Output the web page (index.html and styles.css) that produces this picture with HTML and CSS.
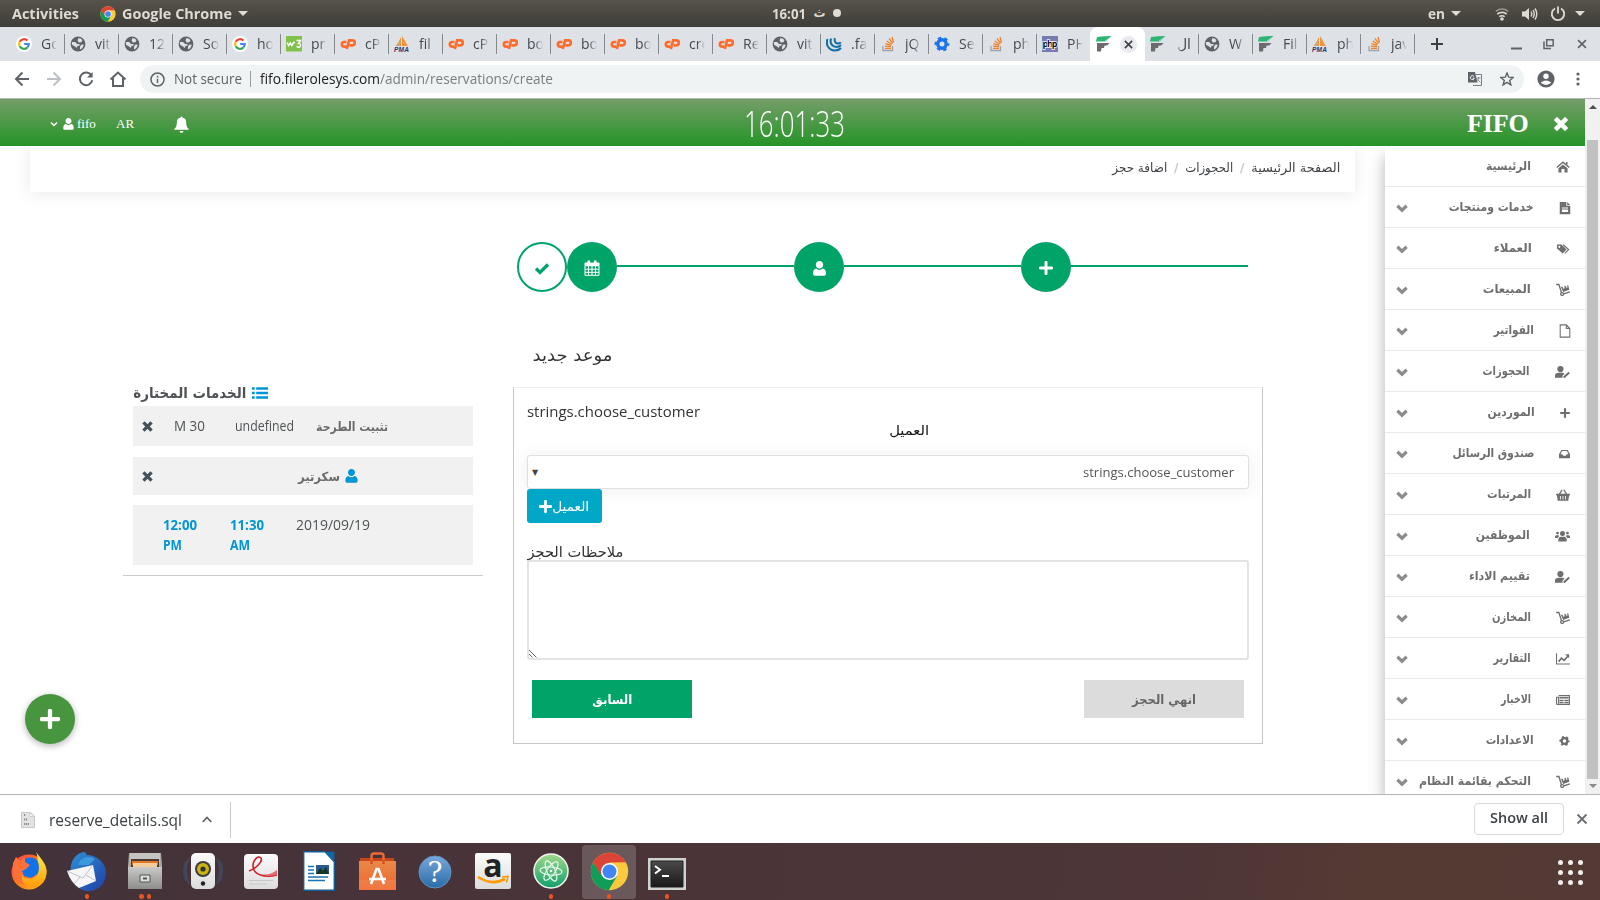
FILE: index.html
```html
<!DOCTYPE html>
<html lang="en">
<head>
<meta charset="utf-8">
<title>FIFO</title>
<link rel="stylesheet" href="styles.css">
</head>
<body>
<svg class="defs" width="0" height="0">
  <defs>
    <linearGradient id="gff" x1="0" y1="0" x2="1" y2="1"><stop offset="0" stop-color="#ff3b4e"/><stop offset=".5" stop-color="#ff7a1c"/><stop offset="1" stop-color="#ffc51a"/></linearGradient>
    <linearGradient id="gffy" x1="0" y1="0" x2="0" y2="1"><stop offset="0" stop-color="#fff14a"/><stop offset="1" stop-color="#ff9a0a"/></linearGradient>
    <linearGradient id="gtb" x1="0" y1="0" x2="1" y2="1"><stop offset="0" stop-color="#2f8fd6"/><stop offset="1" stop-color="#1f3fa5"/></linearGradient>
    <linearGradient id="ggrey" x1="0" y1="0" x2="0" y2="1"><stop offset="0" stop-color="#c9c9c7"/><stop offset="1" stop-color="#8d8d8b"/></linearGradient>
    <linearGradient id="gwhite" x1="0" y1="0" x2="0" y2="1"><stop offset="0" stop-color="#fbfbfb"/><stop offset="1" stop-color="#dcdcdc"/></linearGradient>
    <linearGradient id="gbag" x1="0" y1="0" x2="0" y2="1"><stop offset="0" stop-color="#e8894a"/><stop offset="1" stop-color="#f0652a"/></linearGradient>
    <linearGradient id="ghelp" x1="0" y1="0" x2="0" y2="1"><stop offset="0" stop-color="#79a8dc"/><stop offset="1" stop-color="#2b6ca6"/></linearGradient>
    <linearGradient id="gatom" x1="0" y1="0" x2="0" y2="1"><stop offset="0" stop-color="#a3d98a"/><stop offset="1" stop-color="#109f6d"/></linearGradient>
    <linearGradient id="gterm" x1="0" y1="0" x2="0" y2="1"><stop offset="0" stop-color="#4a4a4a"/><stop offset="1" stop-color="#191919"/></linearGradient>
  </defs>
  <symbol id="chrome" viewBox="0 0 48 48"><circle cx="24" cy="24" r="23" fill="#fbc93d"/><path d="M4.100 12.500A23 23 0 0 0 23 47l10-17-9-6-9 5z" fill="#0f9d58"/><path d="M4.100 12.500A23 23 0 0 1 43.900 12.500L24 13 14 29z" fill="#db4437"/><circle cx="24" cy="24" r="10.500" fill="#fff"/><circle cx="24" cy="24" r="8.600" fill="#4285f4"/></symbol>
  <symbol id="google" viewBox="0 0 16 16"><circle cx="8" cy="8" r="8" fill="#fff"/><g fill="none" stroke-width="2.100"><path d="M11.500 4.600A4.900 4.900 0 0 0 3.700 5.700" stroke="#ea4335"/><path d="M3.700 5.700a4.900 4.900 0 0 0 0 4.600" stroke="#fbbc05"/><path d="M3.700 10.300a4.900 4.900 0 0 0 7.600 1.300" stroke="#34a853"/><path d="M11.300 11.600A4.900 4.900 0 0 0 12.800 8H8.200" stroke="#4285f4"/></g></symbol>
  <symbol id="globe" viewBox="0 0 16 16"><circle cx="8" cy="8" r="7.400" fill="#5f6368"/><path d="M1.800 6h3.400l1.800 1.900h2.500v1.800H7.600L6.800 12 5 10.600 2 8.800zM8.200 2.200l2.600.4 1.600 1.600-1 2-2.700.2-1.100-1.800zM10 10.500l1.500-2 2.400.2-1.600 3.600-2.300 1.200z" fill="#dee1e6"/></symbol>
  <symbol id="w3" viewBox="0 0 16 16"><path d="M0 0h16v15.500H0z" fill="#7fc24a"/><path d="M1 6.500l1.600 3L4.200 7l1.600 2.500L7.500 6.500h1.500" stroke="#fff" stroke-width="1.500" fill="none"/><path d="M10.500 4.500h4L12.500 7.500c3 0 2.500 4-.3 3.800l-1.700-.9" stroke="#fff" stroke-width="1.500" fill="none"/></symbol>
  <symbol id="cp" viewBox="0 0 16 16"><g fill="none" stroke="#ff6c2c" stroke-width="2.700"><path d="M6.500 6H4.200a2.300 2.300 0 0 0 0 4.700H6"/><path d="M6.800 13l2.300-8.700h3.300a2.500 2.500 0 0 1 0 5H9.500"/></g></symbol>
  <symbol id="pma" viewBox="0 0 16 16"><path d="M7 1 2.500 10H7zM8 0l5.800 10H8z" fill="#f5933a"/><path d="M1.500 10h4L7 3z" fill="#c9a87c"/><text x="0" y="15.500" font-family="Liberation Sans" font-size="6.500" font-weight="bold" font-style="italic" fill="#33336b" textLength="15">PMA</text></symbol>
  <symbol id="jq" viewBox="0 0 16 16"><g fill="none" stroke="#0f71a8" stroke-width="2"><path d="M1.500 3c-2 6 1.500 11.500 7.500 11.500 2.500 0 4.500-.8 6-2.500"/><path d="M5 2.500c-1.500 5 1.500 8.500 5.500 8.500 2 0 3.500-.8 4.500-2"/><path d="M8.800 2c-1 3.500 1 5.500 3.500 5.500 1.300 0 2-.5 2.500-1.300"/></g></symbol>
  <symbol id="so" viewBox="0 0 16 16"><path d="M3 10v4.500h9.500V10" fill="none" stroke="#a0a2a5" stroke-width="1.300"/><g stroke="#f48024" stroke-width="1.300"><path d="M5 12.400h6M5 10.200l6 .5M5.400 7.700l5.700 1.600M6.700 5l5 3.300M9 2.500l3.700 4.800M12 1l1.500 5.500"/></g></symbol>
  <symbol id="gear" viewBox="0 0 16 16"><circle cx="8" cy="8" r="4.200" fill="none" stroke="currentColor" stroke-width="3.400"/><circle cx="8" cy="8" r="6.300" fill="none" stroke="currentColor" stroke-width="2.200" stroke-dasharray="3.300 3.300" stroke-dashoffset="1.600"/></symbol>
  <symbol id="php" viewBox="0 0 16 16"><path d="M0 0h16v16H0z" fill="#777bb3"/><text x=".5" y="10.800" font-family="Open Sans" font-size="9" font-weight="bold" fill="#111" stroke="#fff" stroke-width="1.500" paint-order="stroke" textLength="15">php</text></symbol>
  <symbol id="fr" viewBox="0 0 16 16"><path d="M1 1Q8 0 15.500 0L12 3.500 9.500 5.500H0z" fill="#2bb673"/><path d="M9 5l6-4" stroke="#dee1e6" stroke-width=".7"/><path d="M1 7h12.500l-2 2.300-3 .5-.5 2.200H5.500L5 15.500H1z" fill="#6b6b6b"/></symbol>
  <symbol id="times" viewBox="0 0 16 16"><path d="M3 3l10 10M13 3 3 13" stroke="currentColor" stroke-width="4"/></symbol>
  <symbol id="x" viewBox="0 0 16 16"><path d="M3.500 3.500l9 9M12.500 3.500l-9 9" stroke="currentColor" stroke-width="1.900"/></symbol>
  <symbol id="plus" viewBox="0 0 16 16"><path d="M8 1.500v13M1.500 8h13" stroke="currentColor" stroke-width="3.400" stroke-linecap="round"/></symbol>
  <symbol id="user" viewBox="0 0 448 512"><path fill="currentColor" d="M224 256c70.700 0 128-57.300 128-128S294.700 0 224 0 96 57.300 96 128s57.300 128 128 128zm110 0c-30 28-70 44-110 44s-80-16-110-44C40 262 0 330 0 422c0 54 21.500 82 60 82h328c38.500 0 60-28 60-82 0-92-40-160-114-166z"/></symbol>
  <symbol id="chev" viewBox="0 0 16 16"><path d="M1.800 5l6.200 6 6.200-6" fill="none" stroke="currentColor" stroke-width="4.200"/></symbol>
  <symbol id="thinchev" viewBox="0 0 16 16"><path d="M2 5l6 6 6-6" fill="none" stroke="currentColor" stroke-width="2.600"/></symbol>
  <symbol id="bell" viewBox="0 0 16 18"><path fill="currentColor" d="M7 1.500a1 1 0 0 1 2 0c3 .5 4 2.800 4 5.500 0 3.500 1 5.300 2.600 6.500v1H.4v-1C2 12.300 3 10.500 3 7c0-2.700 1-5 4-5.500zM6 15.800h4a2 2 0 0 1-4 0z"/></symbol>
  <symbol id="home" viewBox="0 0 16 16"><path d="M.8 8.600 8 2.600l7.200 6" fill="none" stroke="currentColor" stroke-width="1.700"/><path d="M2.800 9.300 8 5l5.200 4.300V14.300H9.700v-4H6.300v4H2.800zM11.300 2.300h1.900v3.500l-1.900-1.600z" fill="currentColor"/></symbol>
  <symbol id="filealt" viewBox="0 0 16 16"><path fill="currentColor" fill-rule="evenodd" d="M2 1h7.500v4.500H14V15H2zM10.500 1 14 4.500h-3.500zM4.500 7.500v1.200h7V7.500zm0 2.300v2.700h7V9.800z"/></symbol>
  <symbol id="tags" viewBox="0 0 16 16"><path fill="currentColor" fill-rule="evenodd" d="M0 2.500h5.500l6.300 6.200-4.800 4.800L0 7.500zM2.800 4a1.200 1.200 0 1 0 .1 0z"/><path d="M7.500 2.800l6.800 6-4.600 4.700" fill="none" stroke="currentColor" stroke-width="1.400"/></symbol>
  <symbol id="dolly" viewBox="0 0 16 16"><g fill="none" stroke="currentColor" stroke-width="1.500"><path d="M.3 1.700h3l3 9.500"/><circle cx="7" cy="12.700" r="1.700"/><path d="M8.800 12.400l7-2.300"/></g><path fill="currentColor" d="M5.700 4.500l1.600-.5 1.300 2.600 1.200-.4-.2-2.800 1.400-.4 1 2.700 1-.4-.2-2.500 1.200-.3 1.200 5.200-7 2.500z"/></symbol>
  <symbol id="file" viewBox="0 0 16 16"><path fill="none" stroke="currentColor" stroke-width="1.200" d="M2.500 1h7L13.500 5v10h-11zM9.500 1v4h4"/></symbol>
  <symbol id="useredit" viewBox="0 0 18 16"><circle cx="6.500" cy="4.500" r="3.700" fill="currentColor"/><path fill="currentColor" d="M0 15v-2.500C0 10 2 9 4 9h5c1 0 1.800.3 2.500.9L9 12.500V15z"/><path d="M10.500 14.500l6.500-6" stroke="currentColor" stroke-width="2.400"/></symbol>
  <symbol id="inbox" viewBox="0 0 16 16"><path fill="currentColor" fill-rule="evenodd" d="M3.500 2h9l3.500 6.500V14H0V8.500zm1 1.800L2.200 8.500H5L6 10.500h4l1-2h2.800L11.500 3.800z"/></symbol>
  <symbol id="basket" viewBox="0 0 16 16"><path d="M4 7l3-5M12 7 9 2" stroke="currentColor" stroke-width="1.500"/><path fill="currentColor" fill-rule="evenodd" d="M0 6.500h16v1.700h-1L14 14.500H2L1 8.200H0zM4.500 9v4h1V9zm3 0v4h1V9zm3 0v4h1V9z"/></symbol>
  <symbol id="users" viewBox="0 0 18 16"><g fill="currentColor"><circle cx="9" cy="5" r="3"/><circle cx="3" cy="4.500" r="1.700"/><circle cx="15" cy="4.500" r="1.700"/><path d="M4 14.500v-2C4 10 5.500 9 7 9h4c1.500 0 3 1 3 3.500v2zM0 10.500V9c0-1.300.8-2 2-2h2l1 1-1.800 2.500zM18 10.500V9c0-1.300-.8-2-2-2h-2l-1 1 1.800 2.500z"/></g></symbol>
  <symbol id="chart" viewBox="0 0 16 16"><g fill="none" stroke="currentColor"><path d="M.6 1.500V13.800H16" stroke-width="1.200"/><path d="M3 11l3.300-4 3 2.500 4.500-5" stroke-width="1.900"/></g><path fill="currentColor" d="M10.500 2.500H15v4.500z"/></symbol>
  <symbol id="news" viewBox="0 0 16 16"><path fill="none" stroke="currentColor" stroke-width="1.300" d="M3 3h12.300v10H1.500Q.6 13 .6 12V4.800H3V12"/><path d="M4 5.500h10.500M4 8.500h4.600M9.500 8.500h5M4 11h4.600M9.500 11h5" stroke="currentColor" stroke-width="1.700"/></symbol>
  <symbol id="list" viewBox="0 0 16 12"><path d="M0 1.500h2.700M0 6h2.700M0 10.500h2.700M4.200 1.500H16M4.200 6H16M4.200 10.500H16" stroke="currentColor" stroke-width="2.300"/></symbol>
  <symbol id="check" viewBox="0 0 16 16"><path d="M2 8.500l4 4 8-8" fill="none" stroke="currentColor" stroke-width="3.300"/></symbol>
  <symbol id="cal" viewBox="0 0 16 16"><path fill="none" stroke="currentColor" stroke-width="1" d="M1 3h14v12.300H1zM1 9.300h14M1 12.300h14M4.500 6v9M8 6v9M11.500 6v9"/><path d="M1 3h14v3.300H1z" fill="currentColor"/><path d="M4.700.5v3.500M11.300.5v3.500" stroke="currentColor" stroke-width="2.400"/></symbol>
</svg>

<div class="topbar">
  <div class="topbar-left"><span data-w="67">Activities</span><svg class="i16"><use href="#chrome"/></svg><span data-w="110">Google Chrome</span><i class="tri"></i></div>
  <div class="topbar-mid"><span data-w="34">16:01</span><span class="day" dir="rtl">ث</span><i class="dot"></i></div>
  <div class="topbar-right"><span data-w="17">en</span><i class="tri"></i>
    <svg class="wifi" width="14" height="14" viewBox="0 0 14 14" fill="none" stroke="#dfdbd2" stroke-width="1.600"><path d="M.8 4.300q6.200-4.500 12.400 0" stroke="#9a968e"/><path d="M2.300 7q4.700-3.300 9.400 0M4.300 9.600q2.700-1.800 5.400 0"/><circle cx="7" cy="12" r="1" fill="#dfdbd2"/></svg>
    <svg class="vol" width="16" height="14" viewBox="0 0 16 14" fill="none" stroke="#dfdbd2" stroke-width="1.400"><path d="M0 4.500h3L7 1v12L3 9.500H0z" fill="#dfdbd2" stroke="none"/><path d="M9 4.500q1.500 2.500 0 5M11 3q2.500 4 0 8M13 1.500q3.500 5.500 0 11"/></svg>
    <svg class="power" width="16" height="16" viewBox="0 0 16 16" fill="none" stroke="#dfdbd2" stroke-width="1.800"><path d="M5 2.500a6.200 6.200 0 1 0 6 0M8 .5v7"/></svg><i class="tri"></i></div>
</div>

<div class="tabs">
  <div class="tab"><svg class="i16"><use href="#google"/></svg><span>Go</span></div>
  <div class="tab"><svg class="i16"><use href="#globe"/></svg><span>vit</span></div>
  <div class="tab"><svg class="i16"><use href="#globe"/></svg><span>12</span></div>
  <div class="tab"><svg class="i16"><use href="#globe"/></svg><span>So</span></div>
  <div class="tab"><svg class="i16"><use href="#google"/></svg><span>ho</span></div>
  <div class="tab"><svg class="i16"><use href="#w3"/></svg><span>pr</span></div>
  <div class="tab"><svg class="i16"><use href="#cp"/></svg><span>cP</span></div>
  <div class="tab"><svg class="i16"><use href="#pma"/></svg><span>fil</span></div>
  <div class="tab"><svg class="i16"><use href="#cp"/></svg><span>cP</span></div>
  <div class="tab"><svg class="i16"><use href="#cp"/></svg><span>bo</span></div>
  <div class="tab"><svg class="i16"><use href="#cp"/></svg><span>bo</span></div>
  <div class="tab"><svg class="i16"><use href="#cp"/></svg><span>bo</span></div>
  <div class="tab"><svg class="i16"><use href="#cp"/></svg><span>cre</span></div>
  <div class="tab"><svg class="i16"><use href="#cp"/></svg><span>Re</span></div>
  <div class="tab"><svg class="i16"><use href="#globe"/></svg><span>vit</span></div>
  <div class="tab"><svg class="i16"><use href="#jq"/></svg><span>.fa</span></div>
  <div class="tab"><svg class="i16"><use href="#so"/></svg><span>jQ</span></div>
  <div class="tab"><svg class="i16 blue"><use href="#gear"/></svg><span>Se</span></div>
  <div class="tab"><svg class="i16"><use href="#so"/></svg><span>ph</span></div>
  <div class="tab last"><svg class="i16"><use href="#php"/></svg><span>PH</span></div>
  <div class="tab active"><svg class="i16"><use href="#fr"/></svg><b class="close"><svg width="13" height="13"><use href="#x"/></svg></b></div>
  <div class="tab"><svg class="i16"><use href="#fr"/></svg><span dir="rtl" class="ar">ال</span></div>
  <div class="tab"><svg class="i16"><use href="#globe"/></svg><span>W</span></div>
  <div class="tab"><svg class="i16"><use href="#fr"/></svg><span>Fil</span></div>
  <div class="tab"><svg class="i16"><use href="#pma"/></svg><span>ph</span></div>
  <div class="tab"><svg class="i16"><use href="#so"/></svg><span>jav</span></div>
  <svg class="newtab" width="12" height="12" viewBox="0 0 12 12" stroke="#3c4043" stroke-width="2"><path d="M6 0v12M0 6h12"/></svg>
  <div class="winctl">
    <svg width="11" height="12" viewBox="0 0 11 12"><path d="M0 10.500h11" stroke="#5f6368" stroke-width="2"/></svg>
    <svg width="11" height="11" viewBox="0 0 11 11" fill="none" stroke="#5f6368" stroke-width="1.500"><path d="M3.700.8h6.500v6H3.700zM1 2.500v7h7"/></svg>
    <svg width="14" height="14" color="#5f6368"><use href="#x"/></svg>
  </div>
</div>

<div class="toolbar">
  <svg width="16" height="16" viewBox="0 0 16 16" fill="none" stroke="#5f6368" stroke-width="2"><path d="M15 8H2M8.500 1.500 2 8l6.500 6.500"/></svg>
  <svg width="16" height="16" viewBox="0 0 16 16" fill="none" stroke="#bdc0c4" stroke-width="2"><path d="M1 8h13M7.500 1.500 14 8l-6.500 6.500"/></svg>
  <svg width="16" height="16" viewBox="0 0 16 16" fill="none" stroke="#5f6368" stroke-width="2"><path d="M13.500 4.500A6.300 6.300 0 1 0 14.300 9.300"/><path d="M14.600 1v5.600H9z" fill="#5f6368" stroke="none"/></svg>
  <svg width="18" height="16" viewBox="0 0 18 16" fill="none" stroke="#5f6368" stroke-width="2"><path d="M1.500 8.500 9 1.500l7.500 7M4 7v8h10V7"/></svg>
  <div class="omni">
    <svg width="15" height="15" viewBox="0 0 15 15" fill="none" stroke="#5f6368" stroke-width="1.500"><circle cx="7.500" cy="7.500" r="6.500"/><path d="M7.500 6.700v4.300M7.500 3.800v1.600"/></svg>
    <span class="ns" data-w="68">Not secure</span><i class="bar"></i>
    <span class="host" data-w="120">fifo.filerolesys.com</span><span class="path" data-w="173">/admin/reservations/create</span>
    <svg class="trans" width="14" height="14" viewBox="0 0 14 14"><path d="M0 0h7l2.500 10.500H0z" fill="#5f6368"/><path d="M7.500 2.500H13.500v11H5" fill="none" stroke="#7c8084"/><path d="M6 4.500a2 2 0 1 0 .3 1.600H4.700" fill="none" stroke="#eff3f4"/><path d="M8.500 6h4M10.500 5v1q0 3-2 4M9.500 7.500l3 3" stroke="#7c8084" fill="none" stroke-width=".8"/></svg>
    <svg width="14" height="14" viewBox="0 0 14 14" fill="none" stroke="#5f6368" stroke-width="1.400"><path d="M7 1l1.700 4.200 4.500.3-3.500 2.900 1.200 4.500L7 10.400l-3.900 2.500 1.200-4.500L.8 5.500l4.500-.3z"/></svg>
  </div>
  <svg class="avatar" width="18" height="18" viewBox="0 0 18 18"><circle cx="9" cy="9" r="8.600" fill="#5f6368"/><circle cx="9" cy="6.300" r="2.700" fill="#fff"/><path d="M3.700 12.800Q9 8.300 14.300 12.800 9 17 3.700 12.800z" fill="#fff"/></svg>
  <svg class="more" width="4" height="14" viewBox="0 0 4 14" fill="#5f6368"><circle cx="2" cy="2" r="1.600"/><circle cx="2" cy="7" r="1.600"/><circle cx="2" cy="12" r="1.600"/></svg>
</div>

<div class="view">
  <div class="site">
    <header class="head">
      <svg class="h-chev" width="8" height="8"><use href="#thinchev"/></svg>
      <svg class="h-user" width="11" height="12"><use href="#user"/></svg>
      <span class="h-name">fifo</span><span class="h-lang">AR</span>
      <svg class="h-bell" width="15" height="17"><use href="#bell"/></svg>
      <span class="clock" data-w="101">16:01:33</span>
      <span class="brand">FIFO</span>
      <svg class="h-x" width="18" height="18"><use href="#times"/></svg>
    </header>
    <div class="cols">
      <main class="main">
        <nav class="crumbs" dir="rtl"><span data-w="89">الصفحة الرئيسية</span><i>/</i><span data-w="48">الحجوزات</span><i>/</i><span data-w="55">اضافة حجز</span></nav>
        <div class="content">
          <aside class="chosen">
            <h4><span dir="rtl" data-w="113">الخدمات المختارة</span><svg width="16" height="12"><use href="#list"/></svg></h4>
            <div class="line l1"><svg class="lx"><use href="#times"/></svg><span class="c1" data-w="31">M 30</span><span class="c2" data-w="59">undefined</span><b dir="rtl" data-w="72">تثبيت الطرحة</b></div>
            <div class="line l2"><svg class="lx"><use href="#times"/></svg><b class="sec" dir="rtl" data-w="42">سكرتير</b><svg class="lu" width="13" height="14"><use href="#user"/></svg></div>
            <div class="line l3"><b class="t"><span data-w="34">12:00</span><br><span data-w="19">PM</span></b><b class="t"><span data-w="34">11:30</span><br><span data-w="20">AM</span></b><span class="date" data-w="74">2019/09/19</span></div>
          </aside>
          <section class="wizard">
            <div class="steps">
              <i class="step open"><svg class="i16"><use href="#check"/></svg></i>
              <i class="step"><svg class="i16"><use href="#cal"/></svg></i><i class="rail"></i>
              <i class="step"><svg width="13" height="15"><use href="#user"/></svg></i><i class="rail"></i>
              <i class="step"><svg width="14" height="14"><use href="#plus"/></svg></i><i class="rail"></i>
            </div>
            <h3><span dir="rtl" data-w="80">موعد جديد</span></h3>
            <div class="card">
              <div class="lbl"><span data-w="173">strings.choose_customer</span></div>
              <div class="lbl2"><span dir="rtl" data-w="40">العميل</span></div>
              <div class="select"><i>▼</i><span data-w="151">strings.choose_customer</span></div>
              <div class="add"><svg width="13" height="13"><use href="#plus"/></svg><span dir="rtl" data-w="37">العميل</span></div>
              <div class="lbl3"><span dir="rtl" data-w="96">ملاحظات الحجز</span></div>
              <div class="area"><svg width="8" height="8" viewBox="0 0 8 8" stroke="#555" stroke-width=".9"><path d="M0 0l7.500 7.500M0 4l3.500 3.500"/></svg></div>
              <div class="btns"><div class="btn ok"><span dir="rtl" data-w="40">السابق</span></div><div class="btn no"><span dir="rtl" data-w="64">انهي الحجز</span></div></div>
            </div>
          </section>
        </div>
        <div class="fab"><svg width="20" height="20"><use href="#plus"/></svg></div>
      </main>
      <aside class="side" dir="rtl">
        <div class="item"><svg class="w14"><use href="#home"/></svg><span data-w="45">الرئيسية</span></div>
        <div class="item"><svg class="wf"><use href="#filealt"/></svg><span data-w="85">خدمات ومنتجات</span><svg class="cv"><use href="#chev"/></svg></div>
        <div class="item"><svg class="w13"><use href="#tags"/></svg><span data-w="38">العملاء</span><svg class="cv"><use href="#chev"/></svg></div>
        <div class="item"><svg class="w14"><use href="#dolly"/></svg><span data-w="48">المبيعات</span><svg class="cv"><use href="#chev"/></svg></div>
        <div class="item"><svg class="wf"><use href="#file"/></svg><span data-w="40">الفواتير</span><svg class="cv"><use href="#chev"/></svg></div>
        <div class="item"><svg class="w15"><use href="#useredit"/></svg><span data-w="47">الحجوزات</span><svg class="cv"><use href="#chev"/></svg></div>
        <div class="item"><svg class="w9"><use href="#plus"/></svg><span data-w="47">الموردين</span><svg class="cv"><use href="#chev"/></svg></div>
        <div class="item"><svg class="w10"><use href="#inbox"/></svg><span data-w="82">صندوق الرسائل</span><svg class="cv"><use href="#chev"/></svg></div>
        <div class="item"><svg class="w14"><use href="#basket"/></svg><span data-w="44">المرتبات</span><svg class="cv"><use href="#chev"/></svg></div>
        <div class="item"><svg class="w15"><use href="#users"/></svg><span data-w="54">الموظفين</span><svg class="cv"><use href="#chev"/></svg></div>
        <div class="item"><svg class="w15"><use href="#useredit"/></svg><span data-w="61">تقييم الاداء</span><svg class="cv"><use href="#chev"/></svg></div>
        <div class="item"><svg class="w14"><use href="#dolly"/></svg><span data-w="39">المخازن</span><svg class="cv"><use href="#chev"/></svg></div>
        <div class="item"><svg class="w14"><use href="#chart"/></svg><span data-w="37">التقارير</span><svg class="cv"><use href="#chev"/></svg></div>
        <div class="item"><svg class="w14"><use href="#news"/></svg><span data-w="30">الاخبار</span><svg class="cv"><use href="#chev"/></svg></div>
        <div class="item"><svg class="w10"><use href="#gear"/></svg><span data-w="48">الاعدادات</span><svg class="cv"><use href="#chev"/></svg></div>
        <div class="item"><svg class="w14"><use href="#dolly"/></svg><span data-w="112">التحكم بقائمة النظام</span><svg class="cv"><use href="#chev"/></svg></div>
      </aside>
    </div>
  </div>
  <div class="scroll"><i class="up"></i><i class="thumb"></i><i class="down"></i></div>
</div>

<div class="dl">
  <svg width="14" height="16" viewBox="0 0 14 16"><path d="M.5.500h9L13.500 4v11.500H.5z" fill="#e3e3e3" stroke="#c9c9c9"/><path d="M8.500.500 9 4.500h4.500z" fill="#fafafa" stroke="#bbb" stroke-width=".6"/><path d="M3 3h1.500M3 7.500h3.500M3 12h5.500" stroke="#8b8b8b" stroke-width="2" stroke-dasharray="1.200 .7"/></svg>
  <span class="fn" data-w="133">reserve_details.sql</span>
  <svg class="caret" width="10" height="7" viewBox="0 0 10 7" fill="none" stroke="#5f6368" stroke-width="1.800"><path d="M.7 6 5 1.500 9.300 6"/></svg>
  <i class="bar"></i>
  <div class="showall"><span data-w="58">Show all</span></div>
  <svg class="dlx" width="16" height="16"><use href="#x"/></svg>
</div>

<div class="dock">
  <div class="app"><svg width="38" height="40" viewBox="0 0 38 40"><circle cx="19" cy="21" r="17.500" fill="url(#gff)"/><circle cx="20" cy="18" r="11.500" fill="#1272e8"/><path d="M3 12 6 6l4 4 5-4v5l5 3-4 4-4 2 2 5 7 2 6-4-3 8-12 2-9-8z" fill="#ff7139"/><path d="M26 1c2 4 1 6 2 10 2 6 1 14-5 16-5 2-9 0-11-3-1 9 6 14 14 12 8-2 12-11 10-19-1-5-6-11-10-16z" fill="url(#gffy)"/></svg></div>
  <div class="app"><svg width="40" height="40" viewBox="0 0 40 40"><path d="M4 22C2 10 10 1 18 1l2 3c10 0 19 8 19 18S32 40 22 40C12 40 5 33 4 22z" fill="url(#gtb)"/><path d="M11 14C14 4 24 5 28 8l-6 6z" fill="#3b98dc"/><path d="M0 20l26-6 3 16-17 7q-8-5-12-17z" fill="#f6f6f8"/><path d="M0 20l16 7 10-13M7 33l6-7M29 30l-10-6" fill="none" stroke="#b7bccb" stroke-width=".9"/></svg><i class="run"><b></b></i></div>
  <div class="app"><svg width="36" height="38" viewBox="0 0 36 38"><path d="M2 1h32l1 13v22H1V14z" fill="#a9a9a6"/><path d="M3 1h30v10H3z" fill="#c4c4c1"/><path d="M4 7h28v9H4z" fill="#4a3a30"/><path d="M5 9h26v4H5z" fill="#e27826"/><path d="M6 11h24v4H6z" fill="#f3cd9a"/><path d="M1 15h34v22H1z" fill="url(#ggrey)"/><path d="M13 23h10v7H13z" fill="#ddd" stroke="#555"/><path d="M16 25.500h4v2h-4z" fill="#555"/></svg><i class="run"><b></b><b></b></i></div>
  <div class="app"><svg width="40" height="38" viewBox="0 0 40 38"><path d="M6 6q-6 13 0 26M34 6q6 13 0 26M3 9q-4 10 0 20M37 9q4 10 0 20" fill="none" stroke="#43465a" stroke-width="2"/><rect x="8" y="1" width="24" height="36" rx="5" fill="url(#gwhite)"/><circle cx="20" cy="17" r="8" fill="#3d3d3d"/><circle cx="20" cy="17" r="6" fill="#cdb310"/><circle cx="20" cy="17" r="2.600" fill="#333"/><circle cx="20" cy="31.500" r="2.200" fill="#222"/></svg></div>
  <div class="app"><svg width="36" height="37" viewBox="0 0 36 37"><rect x="1" y="1" width="34" height="35" rx="4" fill="url(#gwhite)"/><path d="M6 18C12 16 20 9 18 5c-3-3-8 2-8 8 0 9 12 12 24 9" fill="none" stroke="#d21f2c" stroke-width="1.600"/><path d="M18 21q8 2 16-4v5q-9 2-16-1z" fill="#e46a70"/><path d="M6 27.500h24M6 31h18" stroke="#c9c9c9"/></svg></div>
  <div class="app"><svg width="32" height="40" viewBox="0 0 32 40"><path d="M.7.700H22l9.300 10v28.600H.7z" fill="#fff" stroke="#0f5e96" stroke-width="1.400"/><path d="M22 .700h9.300v10z" fill="#0a69a8"/><path d="M5 15.500h6M5 19h6M5 22.500h6M5 26h20M5 29.500h17" stroke="#1b74b3" stroke-width="1.700"/><path d="M13 14h13v9H13z" fill="#2b5d8a"/><path d="M13 23l4-6 3 3 3-4 3 7z" fill="#16361f"/></svg></div>
  <div class="app"><svg width="37" height="39" viewBox="0 0 37 39"><path d="M1 6h34v6H1z" fill="#c9461a"/><path d="M12.500 12V4q0-2.500 2.500-2.500h7q2.500 0 2.500 2.500v8" fill="none" stroke="#ef6a35" stroke-width="2.400"/><path d="M0 9h37v29H0z" fill="url(#gbag)"/><path d="M12.500 8v4M24.500 8v4" stroke="#d9501f" stroke-width="2.400"/><path d="M0 28h37v10H0z" fill="#fff" opacity=".1"/><path d="M12 32l5.500-15h2L25 32M10 27h17" fill="none" stroke="#fff" stroke-width="2.600"/></svg></div>
  <div class="app"><svg width="34" height="36" viewBox="0 0 34 36"><circle cx="17" cy="19" r="16" fill="url(#ghelp)" stroke="#5e94cb"/><text x="17" y="29" text-anchor="middle" font-family="DejaVu Serif" font-size="28" fill="#fff">?</text></svg></div>
  <div class="app"><svg width="36" height="36" viewBox="0 0 36 36"><rect width="36" height="36" rx="2" fill="url(#gwhite)"/><text x="18" y="24" text-anchor="middle" font-family="Open Sans" font-size="32" font-weight="bold" fill="#222">a</text><path d="M3 24q14 9 27 2" fill="none" stroke="#ff9900" stroke-width="2.600"/><path d="M27 24l6-.5-1.500 6" fill="none" stroke="#ff9900" stroke-width="1.600"/></svg></div>
  <div class="app"><svg width="36" height="36" viewBox="0 0 36 36"><circle cx="18" cy="18" r="17" fill="url(#gatom)" stroke="#f2f7f2" stroke-width="1.500"/><g fill="none" stroke="#eefaf0" stroke-width="1.100"><ellipse cx="18" cy="18" rx="11" ry="4" transform="rotate(5 18 18)"/><ellipse cx="18" cy="18" rx="11" ry="4" transform="rotate(65 18 18)"/><ellipse cx="18" cy="18" rx="11" ry="4" transform="rotate(125 18 18)"/></g><circle cx="18" cy="18" r="1.300" fill="#fff"/></svg><i class="run"><b></b></i></div>
  <div class="app on"><svg width="39" height="39"><use href="#chrome"/></svg><i class="run"><b></b></i></div>
  <div class="app"><svg class="term" width="38" height="32" viewBox="0 0 38 32"><path d="M0 0h38v32H0z" fill="#cfd3cf"/><path d="M3 3h32v26H3z" fill="url(#gterm)" stroke="#222"/><path d="M7 8l5 3.800L7 15.500M14 18h7" fill="none" stroke="#fff" stroke-width="2"/></svg><i class="run"><b></b></i></div>
  <div class="grid"><b></b><b></b><b></b><b></b><b></b><b></b><b></b><b></b><b></b></div>
</div>
<script src="fit.js"></script>
</body>
</html>
```
FILE: styles.css
```css
* { box-sizing: border-box; }
body { margin: 0; width: 1600px; height: 900px; overflow: hidden; display: flex; flex-direction: column; background: #fff; font-family: "Open Sans", "DejaVu Sans", sans-serif; }
body > * { flex: none; }
svg { display: block; flex: none; }
i { font-style: normal; }
.defs { position: absolute; }
.i16 { width: 16px; height: 16px; }
.blue { color: #1a73e8; }
[data-w] { display: inline-block; width: max-content; white-space: nowrap; flex: none; transform-origin: 0 50%; }
[data-w]:dir(rtl) { transform-origin: 100% 50%; }

.topbar { height: 27px; background: linear-gradient(#57534b, #3f3d38); color: #dfdbd2; font-size: 14px; font-weight: 700; display: grid; grid-template-columns: 1fr auto 1fr; align-items: center; }
.topbar > div { display: flex; align-items: center; }
.topbar-left { padding-left: 12px; }
.topbar-left .i16 { margin: 0 6px 0 21px; }
.tri { border: 5px solid transparent; border-top-color: #dfdbd2; border-bottom: 0; }
.topbar-left .tri { margin-left: 6px; }
.topbar-mid { gap: 7px; margin: 0 0 1px 13px; }
.day { font-family: "DejaVu Sans"; font-size: 12px; }
.dot { width: 8px; height: 8px; border-radius: 50%; background: #dfdbd2; }
.topbar-right { justify-content: flex-end; padding-right: 15px; }
.topbar-right .tri { margin-left: 6px; }
.wifi { margin-left: 34px; }
.vol { margin-left: 13px; }
.power { margin: 0 3px 0 12px; }

.tabs { height: 34px; background: #dee1e6; display: flex; padding-left: 10px; font-size: 14px; color: #45494d; }
.tab { width: 54px; display: flex; align-items: center; padding-left: 6px; position: relative; }
.tab::after { content: ""; position: absolute; right: -1px; top: 7px; width: 1px; height: 20px; background: #85898e; }
.tab.active::after, .tab.last::after { display: none; }
.tab span { width: 16px; margin: 0 0 1px 9px; overflow: hidden; white-space: nowrap; mask-image: linear-gradient(90deg, #000 50%, transparent); }
.tab .ar { font-family: "DejaVu Sans"; mask-image: linear-gradient(270deg, #000 50%, transparent); }
.tab.active { background: #fff; border-radius: 8px 8px 0 0; width: 55px; margin-right: -1px; }
.close { width: 17px; height: 17px; border-radius: 50%; background: #e8eaed; display: grid; place-items: center; margin-left: 8px; color: #3c4043; }
.newtab { margin: 11px 0 0 17px; }
.winctl { margin-left: auto; display: flex; align-items: center; gap: 21px; padding-right: 11px; }

.toolbar { height: 38px; border-bottom: 1px solid #b5b5b5; display: flex; align-items: center; padding: 0 20px 1px 14px; }
.toolbar > svg { margin-right: 16px; }
.toolbar > svg:nth-child(3) { margin-right: 15px; }
.omni { width: 1384px; height: 28px; border-radius: 14px; background: #eff3f4; display: flex; align-items: center; padding: 0 10px; font-size: 14.500px; margin-left: -3px; }
.omni > span { margin-bottom: 1px; }
.ns { color: #5f6368; margin-left: 9px; }
.omni .bar { width: 1px; height: 16px; background: #9a9da1; margin: 0 9px 0 8px; }
.host { color: #202124; }
.path { color: #7a7e83; }
.trans { margin: 0 18px 0 auto; }
.toolbar .avatar { margin: 0 21px 0 13px; }
.toolbar .more { margin: 0; }

.view { height: 695px; display: flex; overflow: hidden; }
.site { width: 1585px; display: flex; flex-direction: column; }
.head { height: 47px; flex: none; background: linear-gradient(#749e69, #259426); color: #fff; display: grid; grid-template-columns: 50px 13px 14px 39px 57px 571px 723px 85px 1fr; align-items: center; font-family: "Liberation Serif", serif; font-size: 13px; padding-top: 3px; z-index: 2; }
.h-bell { margin-left: 1px; }
.head > .h-chev { grid-column: 2; }
.clock { font-family: "Open Sans", sans-serif; font-weight: 300; font-size: 36px; line-height: 40px; }
.brand { font-weight: 700; font-size: 26px; letter-spacing: -.1px; }
.cols { flex: 1; display: flex; min-height: 0; }
.main { width: 1385px; position: relative; overflow: hidden; }
.crumbs { margin: 0 30px; height: 46px; box-shadow: 0 1px 15px 1px rgba(69, 65, 78, .1); display: flex; align-items: center; padding: 0 15px 3px; font-family: "DejaVu Sans"; font-size: 12.500px; color: #3f4246; }
.crumbs i { width: 18px; text-align: center; color: #bbb; flex: none; }
.content { display: grid; grid-template-columns: 360px 750px; gap: 30px; padding-left: 123px; }

.chosen { padding: 188px 10px 10px; height: 384px; border-bottom: 1px solid #ccc; color: #4f5355; font-size: 14px; }
.chosen h4 { margin: 0; height: 26px; padding-bottom: 1px; display: flex; align-items: center; gap: 6px; font: 700 15px "DejaVu Sans"; }
.chosen h4 svg, .lu { color: #0095d5; }
.line { background: #f1f1f1; display: flex; align-items: center; }
.line b[dir] { font-family: "DejaVu Sans"; font-size: 12.500px; color: #6b6b6b; }
.lx { width: 13px; height: 13px; margin-left: 8px; color: #44505a; }
.l1 { height: 40px; margin-bottom: 11px; }
.l1 > span { margin-bottom: 2px; }
.c1 { margin-left: 20px; }
.c2 { margin-left: 30px; margin-right: 22px; }
.l2 { height: 38px; margin-bottom: 10px; }
.l2 .lx { margin-right: 144px; }
.l2 .lu { margin-left: 5px; }
.l3 { height: 60px; padding-left: 30px; align-items: flex-start; line-height: 20px; padding-top: 10px; }
.t { width: 66.500px; color: #0095d5; }

.steps { display: flex; align-items: center; margin: 50px 0 0 4px; width: 731px; }
.step { width: 50px; height: 50px; border-radius: 50%; background: #00a368; color: #fff; display: grid; place-items: center; flex: none; padding-top: 2px; }
.step.open { background: #fff; border: 2px solid #00a368; color: #00a368; padding-top: 1px; }
.rail { flex: 1; height: 2px; background: #00a368; margin-top: -2px; }
.wizard h3 { margin: 43px 0 12px 19px; height: 40px; display: flex; align-items: center; font: 400 17px "DejaVu Sans"; color: #333; }
.card { height: 357px; border: 1px solid #c8c8c8; border-top-color: #eee; padding: 13px; color: #333; }
.lbl { height: 21px; padding-bottom: 2px; display: flex; align-items: center; font-size: 15px; font-weight: 500; }
.lbl2 { height: 17px; display: flex; justify-content: center; align-items: center; font: 13px "DejaVu Sans"; color: #111; padding-left: 45px; width: 720px; }
.select { width: 722px; height: 34px; margin-top: 16px; border: 1px solid #e0e0e0; border-radius: 3px; box-shadow: 0 1px 15px 1px rgba(69, 65, 78, .08); display: flex; align-items: center; justify-content: space-between; padding: 0 14px 0 4px; font-size: 13px; color: #555; background: #fff; }
.select i { font: 8px "DejaVu Sans"; color: #444; }
.add { width: 75px; height: 34px; border-radius: 3px; background: #00a7c6; color: #fff; display: flex; align-items: center; padding-left: 12px; font: 13px "DejaVu Sans"; position: relative; }
.lbl3 { height: 37px; padding-top: 20px; display: flex; align-items: center; font: 15px "DejaVu Sans"; }
.area { width: 722px; height: 100px; border: 2px solid #e3e3e3; border-radius: 3px; display: flex; align-items: flex-end; }
.btns { display: flex; justify-content: space-between; width: 712px; margin: 20px 0 0 5px; }
.btn { width: 160px; height: 38px; display: flex; align-items: center; justify-content: center; font: 700 12.500px "DejaVu Sans"; }
.ok { background: #00a368; color: #fff; }
.no { background: #dcdcdc; color: #666; }
.fab { position: absolute; left: 25px; top: 548px; width: 50px; height: 50px; border-radius: 50%; background: #489540; color: #fff; display: grid; place-items: center; box-shadow: 0 2px 7px rgba(0, 0, 0, .3); }

.side { width: 200px; background: #fff; box-shadow: 0 10px 15px rgba(0, 0, 0, .3); }
.item { height: 41px; border-bottom: 1px solid #e9e9e9; display: flex; align-items: center; padding: 0 15px 1px 11px; font: 700 12px "DejaVu Sans"; color: #6e6e6e; }
.item > svg { margin-top: 2px; }
.item > span { margin-right: 25px; }
.cv { width: 12px; height: 12px; margin-right: auto; color: #8c8c8c; }
.w9 { width: 10px; height: 14px; }
.w10 { width: 11px; height: 14px; }
.w13 { width: 13px; height: 14px; }
.w14 { width: 14px; height: 14px; }
.w15 { width: 15px; height: 14px; }
.item > .wf { width: 14px; height: 14px; margin: 2px -2px 0 -1px; }
.scroll { width: 15px; background: #f1f1f1; display: flex; flex-direction: column; align-items: center; padding: 6px 0; }
.up { border: 4px solid transparent; border-top: 0; border-bottom-color: #505050; }
.down { border: 4px solid transparent; border-bottom: 0; border-top-color: #8a8a8a; margin-top: 5px; }
.thumb { width: 11px; height: 639px; background: #c1c1c1; margin-top: 31px; }

.dl { height: 49px; border-top: 1px solid #b5b5b5; display: flex; align-items: center; padding: 1px 10px 0 21px; background: #fff; }
.fn { margin-left: 14px; font-size: 16px; color: #3c4043; }
.caret { margin-left: 20px; }
.dl .bar { width: 1px; height: 36px; background: #c8c8c8; margin-left: 18px; }
.showall { width: 90px; height: 32px; border: 1px solid #d8dadd; border-radius: 4px; display: flex; align-items: center; justify-content: center; margin: -2px 10px 0 auto; padding-bottom: 2px; font-size: 14px; font-weight: 600; color: #3c4043; }
.dlx { color: #6b6f73; margin-top: -2px; }

.dock { height: 57px; background: linear-gradient(100deg, #43323a, #4a3438 40%, #4e3637 75%, #553a34 85%, #543a34); display: flex; align-items: center; }
.app { width: 54px; height: 54px; margin: 0 2px; border-radius: 4px; display: grid; place-items: center; position: relative; }
.app > svg { margin-top: -1px; }
.app .term { margin-top: 4px; }
.app.on { background: rgba(255, 255, 255, .18); }
.run { position: absolute; bottom: 0; left: 0; width: 54px; display: flex; justify-content: center; gap: 3px; }
.run b { width: 4.500px; height: 4.500px; border-radius: 50%; background: #e95420; }
.grid { margin: 2px 17px 0 auto; display: grid; grid-template-columns: repeat(3, 5px); gap: 5px; }
.grid b { width: 5px; height: 5px; border-radius: 50%; background: #f1eeec; }
```
FILE: fit.js
```js
// Condenses or widens each label to the width given in its data-w attribute.
document.querySelectorAll('[data-w]').forEach(function (el) {
  var want = +el.dataset.w, have = el.getBoundingClientRect().width;
  var gap = parseFloat(getComputedStyle(el).marginInlineEnd) || 0;
  el.style.transform = 'scaleX(' + want / have + ')';
  el.style.marginInlineEnd = (gap + want - have) + 'px';
});
```
